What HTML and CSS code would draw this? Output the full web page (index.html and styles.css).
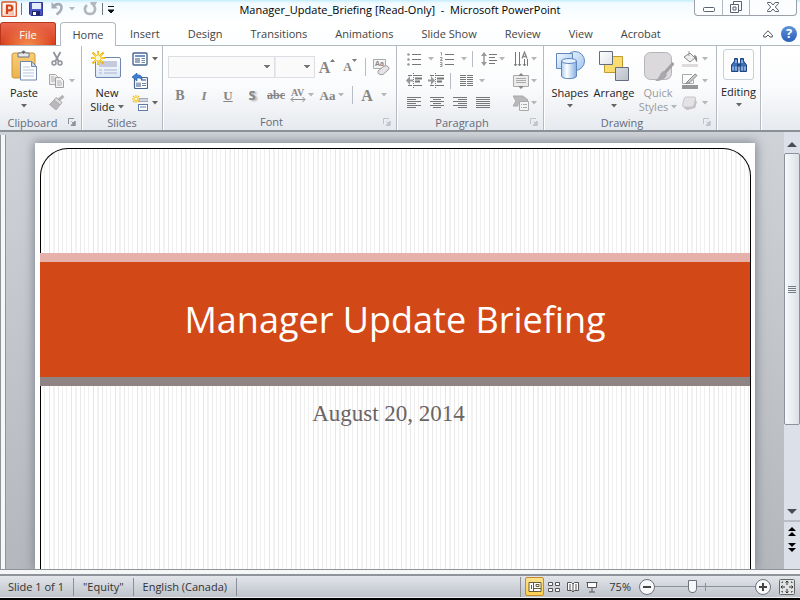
FILE: index.html
```html
<!DOCTYPE html>
<html lang="en">
<head>
<meta charset="utf-8">
<title>Manager_Update_Briefing [Read-Only] - Microsoft PowerPoint</title>
<link rel="stylesheet" href="styles.css">
</head>
<body>
<svg class="defs" aria-hidden="true">
  <defs>
    <linearGradient id="blue" x1="0" y1="0" x2="1" y2="1"><stop offset="0" stop-color="#f4f9ff"/><stop offset="1" stop-color="#9fc4ee"/></linearGradient>
    <linearGradient id="cyl" x1="0" y1="0" x2="1" y2="0"><stop offset="0" stop-color="#a5c9f1"/><stop offset=".35" stop-color="#fff"/><stop offset="1" stop-color="#83afe3"/></linearGradient>
    <linearGradient id="silver" x1="0" y1="0" x2="1" y2="1"><stop offset="0" stop-color="#fff"/><stop offset="1" stop-color="#b9bfc9"/></linearGradient>
    <linearGradient id="gold" x1="0" y1="0" x2="0" y2="1"><stop offset="0" stop-color="#f8ce78"/><stop offset="1" stop-color="#eeb24b"/></linearGradient>
    <linearGradient id="panel" x1="0" y1="0" x2="0" y2="1"><stop offset="0" stop-color="#fff"/><stop offset="1" stop-color="#dbe6f5"/></linearGradient>
    <linearGradient id="office" x1="0" y1="0" x2="1" y2="1"><stop offset="0" stop-color="#fff"/><stop offset="1" stop-color="#f3b79f"/></linearGradient>
    <symbol id="down" viewBox="0 0 6 4"><path d="M0 0h6L3 3.500z" fill="currentColor"/></symbol>
    <symbol id="launch" viewBox="0 0 8 8"><path d="M.5 6V.5H6M3.500 3.500L6 6M7 3v4.500H3z" fill="none" stroke="currentColor"/><path d="M7.500 3v5H3z" fill="currentColor"/></symbol>
    <symbol id="burst" viewBox="0 0 14 14"><path d="M7 0v14M0 7h14M1.500 1.500l11 11M12.500 1.500l-11 11" stroke="#efb310" stroke-width="2"/><path d="M7 1v12M1 7h12M3 3l8 8M11 3l-8 8" stroke="#ffe65c"/><circle cx="7" cy="7" r="2.500" fill="#fffbd0"/></symbol>
  </defs>
</svg>
<div class="app">
  <header class="titlebar">
    <div class="quick">
      <svg class="i16" viewBox="0 0 16 16"><rect x=".8" y="1" width="14.500" height="14.500" rx="1" fill="#fff8f4" stroke="#e0532a" stroke-width="1.400"/><path d="M3 3h10v11H3z" fill="url(#office)"/><path d="M6 13V4.500h2.800a2.400 2.400 0 0 1 0 4.800H6" fill="none" stroke="#d2421a" stroke-width="2.200"/></svg>
      <span class="bar"></span>
      <button class="save" aria-label="Save"><svg class="i16" viewBox="0 0 16 16"><path d="M1.500 1.500h13v13H3l-1.500-1.500z" fill="#4b55c4" stroke="#30389b"/><path d="M4 2h9v6H4z" fill="#e4ecfb"/><path d="M4 10h8v4.500H4z" fill="#1f2769"/><path d="M5 11h3v3H5z" fill="#fff"/></svg></button>
      <button class="undo muted" aria-label="Undo"><svg class="i16" viewBox="0 0 16 16"><path d="M2.500 1v6.500H9z" fill="#a7adb8"/><path d="M4 6.500C6 2.500 12.500 1.500 12.500 6.500c0 3-2 5-5 7" fill="none" stroke="#a7adb8" stroke-width="2.600"/></svg><svg class="arr"><use href="#down"/></svg></button>
      <button class="redo" aria-label="Redo"><svg class="i16" viewBox="0 0 16 16"><path d="M8.500 1H15l-1 2-2 3-3.500-3z" fill="#b3b6bc"/><path d="M5 4C1 7.500 3 13 8 13c5 0 6.500-5.500 3.500-9" fill="none" stroke="#b3b6bc" stroke-width="2.600"/></svg></button>
      <span class="bar"></span>
      <button class="custom" aria-label="Customize Quick Access Toolbar"><svg width="8" height="8" viewBox="0 0 8 8"><path d="M1 .5h6M1 4h6L4 7z" fill="#111" stroke="#111"/></svg></button>
    </div>
    <div class="doc">Manager_Update_Briefing [Read-Only]&nbsp; -&nbsp; Microsoft PowerPoint</div>
    <div class="window">
      <button aria-label="Minimize"><svg width="12" height="13" viewBox="0 0 12 13"><rect x=".5" y="6.500" width="11" height="4" rx="1" fill="#fff" stroke="#5b6270"/></svg></button>
      <button aria-label="Restore"><svg width="12" height="13" viewBox="0 0 12 13"><path d="M3.500 3V.5h8v9H9" fill="#fff" stroke="#5b6270"/><path d="M.5 3.500h8v8h-8zM3 6h3v3H3z" fill="#fff" stroke="#5b6270"/></svg></button>
      <button class="close" aria-label="Close"><svg width="12" height="13" viewBox="0 0 12 13"><path d="M.5 1.500h3.300L6 4l2.200-2.500h3.300v1L8.300 6l3.200 3.500v1H8.200L6 8l-2.200 2.500H.5v-1L3.700 6 .5 2.500z" fill="#fff" stroke="#5b6270"/></svg></button>
    </div>
  </header>

  <nav class="tabs">
    <button class="file">File</button>
    <button class="on">Home</button>
    <button>Insert</button><button>Design</button><button>Transitions</button><button>Animations</button><button>Slide Show</button><button>Review</button><button>View</button><button>Acrobat</button>
    <button class="min" aria-label="Minimize the Ribbon"><svg width="10" height="8" viewBox="0 0 10 8"><path d="M.7 5L5 .8 9.300 5v2H7L5 5 3 7H.7z" fill="#fff" stroke="#50555e"/></svg></button>
    <button class="help" aria-label="Help">?</button>
  </nav>

  <main class="ribbon">
    <section class="group clipboard">
      <div class="body">
        <button class="big"><svg class="pic" viewBox="0 0 32 32"><rect x="4" y="4" width="23" height="25" rx="2" fill="url(#gold)" stroke="#c9963e"/><path d="M10 8V4h3.500a2 2 0 0 1 4 0H21v4z" fill="#e6e9ee" stroke="#6d7581"/><circle cx="15.500" cy="3.500" r="1.200" fill="#555"/><path d="M12.500 12.500h11l5 5V31h-16z" fill="#fdfeff" stroke="#7289ab"/><path d="M23.500 12.500v5h5z" fill="#cbd9ec" stroke="#7289ab"/><path d="M15 18h7M15 21h11M15 24h11M15 27h11" stroke="#b5c5dc"/></svg><span>Paste</span><svg class="arr"><use href="#down"/></svg></button>
        <div class="small muted">
          <button aria-label="Cut"><svg class="i16" viewBox="0 0 16 16"><path d="M4.500 1l5 9M11.500 1l-5 9" stroke="#8f949c" stroke-width="1.800"/><circle cx="5" cy="12" r="2" fill="#eee" stroke="#8f949c" stroke-width="1.500"/><circle cx="11" cy="12" r="2" fill="#eee" stroke="#8f949c" stroke-width="1.500"/></svg></button>
          <button aria-label="Copy"><svg class="i16" viewBox="0 0 16 16"><path d="M.5 1.500h6l2 2v8h-8z" fill="#eee" stroke="#a9a9ab"/><path d="M6.500 4.500h5l3 3v7h-8z" fill="#f2f2f2" stroke="#a0a0a3"/><path d="M2 4h3M2 6h4M2 8h4M8 8h4M8 10h5M8 12h5" stroke="#b0b0b3"/></svg><svg class="arr"><use href="#down"/></svg></button>
          <button aria-label="Format Painter"><svg class="i16" viewBox="0 0 16 16"><path d="M14.500 1l-5 4" stroke="#b4b2b5" stroke-width="3"/><path d="M7 2.500l6 5-2 2.500-6-5z" fill="#dddcde" stroke="#a5a3a6"/><path d="M5 5l6 5-4 5L.5 9.500z" fill="#bab8bb" stroke="#b0aeb1"/></svg></button>
        </div>
      </div>
      <footer><h2>Clipboard</h2><button class="launch" aria-label="Clipboard options"><svg><use href="#launch"/></svg></button></footer>
    </section>

    <section class="group slides">
      <div class="body">
        <button class="big"><svg class="pic" viewBox="0 0 32 32"><rect x="4.500" y="8.500" width="25" height="20" rx="1.500" fill="url(#panel)" stroke="#6e88ae"/><path d="M8 12h18v6H8z" fill="#c5cbdc"/><path d="M8 21h3M13 21h13M8 24h3M13 24h13" stroke="#a7b5cf"/><use href="#burst" x="0" y="2" width="14" height="14"/></svg><span>New</span><span>Slide <svg class="arr"><use href="#down"/></svg></span></button>
        <div class="small">
          <button aria-label="Layout"><svg class="i16" viewBox="0 0 16 16"><rect x="1" y="2" width="14" height="12" rx="1" fill="#fff" stroke="#49648e" stroke-width="1.400"/><path d="M3 4h10v2H3z" fill="#6f93c9"/><path d="M3 7h5v5H3z" fill="#9aa9c0"/><path d="M9.500 7.500H13M9.500 9.500H13M9.500 11.500H13" stroke="#7187a9"/></svg><svg class="arr"><use href="#down"/></svg></button>
          <button aria-label="Reset"><svg class="i16" viewBox="0 0 16 16"><rect x="2.500" y="4.500" width="13" height="11" rx="1" fill="#fff" stroke="#49648e" stroke-width="1.200"/><path d="M9 6h5v2H9z" fill="#86a6d5"/><path d="M4 9.500h5v4.500H4z" fill="#9aa9c0"/><path d="M10 10.500h4M10 12.500h4" stroke="#7187a9"/><path d="M0 4l5-4v2c4-.5 5.500 1.500 5 5C8.500 5 7 5 5 5v3z" fill="#3f7fd0" stroke="#2459a0" stroke-width=".6"/></svg></button>
          <button aria-label="Section"><svg class="i16" viewBox="0 0 16 16"><path d="M7 3.500h9v3H7z" fill="#d2d6df" stroke="#a2a9b7"/><rect x="6.500" y="9.500" width="9" height="6" fill="#fff" stroke="#5f7ba6"/><path d="M8 11h6v2H8z" fill="#b1bfd7"/><use href="#burst" x="0" y="0" width="8" height="8"/></svg><svg class="arr"><use href="#down"/></svg></button>
        </div>
      </div>
      <footer><h2>Slides</h2></footer>
    </section>

    <section class="group font">
      <div class="body rows">
        <div class="line">
          <select class="face" aria-label="Font"><option></option></select><select class="size" aria-label="Font Size"><option></option></select>
          <button class="grow serif" aria-label="Increase Font Size">A<svg width="5" height="16" viewBox="0 0 5 16"><path d="M0 3l2.500-3L5 3z" fill="#777"/></svg></button>
          <button class="shrink serif" aria-label="Decrease Font Size">A<svg width="5" height="16" viewBox="0 0 5 16"><path d="M0 0l2.500 3L5 0z" fill="#777"/></svg></button>
          <span class="bar"></span>
          <button class="clear" aria-label="Clear Formatting"><svg width="18" height="18" viewBox="0 0 18 18"><path d="M1.500 1.500h12v9h-12z" fill="#f4f4f4" stroke="#aaa"/><text x="3" y="8" class="tiny">Aa</text><path d="M6 13l6-5q3-1 4.500 1t-.5 3l-5 4.500q-2.500.5-4-.5T6 13z" fill="#e6e3e6" stroke="#9c999c"/></svg></button>
        </div>
        <div class="line format">
          <button class="ch serif bold">B</button><button class="ch serif italic">I</button><button class="ch serif under">U</button><button class="ch shade">S</button><button class="ch serif strike">abc</button>
          <button class="av serif" aria-label="Character Spacing"><svg width="16" height="16" viewBox="0 0 16 16"><text x="1" y="9" class="avt">AV</text><path d="M1 12.500h14M3.500 10L1 12.500 3.500 15M12.500 10l2.500 2.500-2.500 2.500" fill="none" stroke="#909090"/></svg><svg class="arr"><use href="#down"/></svg></button>
          <button class="case serif">Aa<svg class="arr"><use href="#down"/></svg></button>
          <span class="bar"></span>
          <button class="color serif">A<svg class="arr"><use href="#down"/></svg></button>
        </div>
      </div>
      <footer><h2>Font</h2><button class="launch off" aria-label="Font options"><svg><use href="#launch"/></svg></button></footer>
    </section>

    <section class="group paragraph">
      <div class="body split muted">
        <div class="lines">
          <div class="row">
            <button class="wide" aria-label="Bullets"><svg class="i16" viewBox="0 0 16 16"><path d="M6 3.500h9M6 8.500h9M6 13.500h9" stroke="#777"/><circle cx="2.500" cy="3.500" r="1.300" fill="#999"/><circle cx="2.500" cy="8.500" r="1.300" fill="#999"/><circle cx="2.500" cy="13.500" r="1.300" fill="#999"/></svg><svg class="arr"><use href="#down"/></svg></button>
            <button class="wide" aria-label="Numbering"><svg class="i16" viewBox="0 0 16 16"><path d="M6 3.500h9M6 8.500h9M6 13.500h9" stroke="#777"/><path d="M1.500 1.500h1v3M1 6.500h2v1.500l-2 1.500h2.500M1 11.500h2v4H1M1 13.500h2" fill="none" stroke="#999"/></svg><svg class="arr"><use href="#down"/></svg></button>
            <span class="bar"></span>
            <button aria-label="Line Spacing"><svg class="i16" viewBox="0 0 16 16"><path d="M3 2v12" stroke="#999" stroke-width="1.500"/><path d="M0 5l3-4 3 4zM0 11l3 4 3-4z" fill="#999"/><path d="M8 3.500h8M8 6.500h6M8 9.500h8M8 12.500h6" stroke="#777"/></svg><svg class="arr"><use href="#down"/></svg></button>
          </div>
          <div class="row">
            <button aria-label="Decrease List Level"><svg class="i16" viewBox="0 0 16 16"><path d="M2 2.500h4M8 2.500h8M2 12.500h4M8 12.500h8" stroke="#777"/><path d="M9 5.500h7M9 8.500h5" stroke="#777" stroke-width="2"/><path d="M7.500 0v16" stroke="#777" stroke-dasharray="1 1"/><path d="M7 8.500H4V12L0 7.500 4 3v3.500h3z" fill="#999"/></svg></button>
            <button class="inc" aria-label="Increase List Level"><svg class="i16" viewBox="0 0 16 16"><path d="M2 2.500h4M8 2.500h8M2 12.500h4M8 12.500h8" stroke="#777"/><path d="M9 5.500h7M9 8.500h5" stroke="#777" stroke-width="2"/><path d="M7.500 0v16" stroke="#777" stroke-dasharray="1 1"/><path d="M0 6.500h3V3l4 4.500L3 12V8.500H0z" fill="#999"/></svg></button>
            <span class="bar"></span>
            <button class="cols" aria-label="Columns"><svg class="i16" viewBox="0 0 16 16"><path d="M1 2.500h6M1 4.500h6M1 6.500h6M1 8.500h6M1 10.500h6M1 12.500h6M8 2.500h6M8 4.500h6M8 6.500h6M8 8.500h6M8 10.500h6M8 12.500h6" stroke="#777"/></svg><svg class="arr"><use href="#down"/></svg></button>
          </div>
          <div class="row aligns">
            <button aria-label="Align Left"><svg class="i16" viewBox="0 0 16 16"><path d="M1 2.500h14M1 4.500h9M1 6.500h14M1 8.500h9M1 10.500h14M1 12.500h9" stroke="#777"/></svg></button>
            <button aria-label="Center"><svg class="i16" viewBox="0 0 16 16"><path d="M1 2.500h14M4 4.500h8M1 6.500h14M4 8.500h8M1 10.500h14M4 12.500h8" stroke="#777"/></svg></button>
            <button aria-label="Align Right"><svg class="i16" viewBox="0 0 16 16"><path d="M1 2.500h14M6 4.500h9M1 6.500h14M6 8.500h9M1 10.500h14M6 12.500h9" stroke="#777"/></svg></button>
            <button aria-label="Justify"><svg class="i16" viewBox="0 0 16 16"><path d="M1 2.500h14M1 4.500h14M1 6.500h14M1 8.500h14M1 10.500h14M1 12.500h14" stroke="#777"/></svg></button>
          </div>
        </div>
        <div class="small">
          <button aria-label="Text Direction"><svg class="i16" viewBox="0 0 16 16"><path d="M2.500 1v14M6.500 1v14M11.500 8v7M14.500 8v7" stroke="#777"/><path d="M9 7.500L11.500 1 14 7.500M10 5.500h3" fill="none" stroke="#888" stroke-width="1.300"/><path d="M1 13l1.500 2L4 13M5 13l1.500 2L8 13M10 13l1.500 2 1.500-2" fill="none" stroke="#888"/></svg><svg class="arr"><use href="#down"/></svg></button>
          <button aria-label="Align Text"><svg class="i16" viewBox="0 0 16 16"><path d="M.5 2.500h15v11H.5z" fill="#ececed" stroke="#aaa"/><path d="M3 5.500h10M3 7.500h10M3 9.500h10" stroke="#aaa"/><path d="M5 3l3-3 3 3zM5 13l3 3 3-3z" fill="#888"/></svg><svg class="arr"><use href="#down"/></svg></button>
          <button aria-label="Convert to SmartArt"><svg class="i16" viewBox="0 0 16 16"><path d="M0 1h10l5 4-3 3H5v3H0l3-5z" fill="#b9b9bb" stroke="#aaa"/><path d="M6.500 6.500h9v9h-9z" fill="#f4f4f4" stroke="#aaa"/><path d="M8 9.500h1M10 9.500h4M8 12.500h1M10 12.500h4" stroke="#aaa"/></svg><svg class="arr"><use href="#down"/></svg></button>
        </div>
      </div>
      <footer><h2>Paragraph</h2><button class="launch off" aria-label="Paragraph options"><svg><use href="#launch"/></svg></button></footer>
    </section>

    <section class="group drawing">
      <div class="body">
        <button class="big"><svg class="pic" viewBox="0 0 32 32"><circle cx="21" cy="12" r="9.500" fill="url(#blue)" stroke="#5e87bd"/><path d="M2.500 4.500h16v15h-16z" fill="url(#blue)" stroke="#5e87bd"/><path d="M7.500 12v15c0 3.500 15 3.500 15 0V12z" fill="url(#cyl)" stroke="#5e87bd"/><ellipse cx="15" cy="12" rx="7.500" ry="2.500" fill="#e5f1ff" stroke="#5e87bd"/></svg><span>Shapes</span><svg class="arr"><use href="#down"/></svg></button>
        <button class="big"><svg class="pic" viewBox="0 0 32 32"><path d="M6.500 7.500h18v16h-18z" fill="#fbdc70" stroke="#c09a32"/><path d="M1.500 2.500h13v13h-13zM17.500 18.500h13v13h-13z" fill="url(#silver)" stroke="#626d80"/></svg><span>Arrange</span><svg class="arr"><use href="#down"/></svg></button>
        <button class="big off"><svg class="pic" viewBox="0 0 32 32"><rect x="2.500" y="3.500" width="27" height="27" rx="6" fill="#dcd9dd" stroke="#b6b3b8"/><path d="M31.500 14l-9 10" stroke="#a3a1a5" stroke-width="3"/><path d="M21 22l4 3.500c-2 5-6 6.500-12 6.500 4-2 4-7 8-10z" fill="#aaa8ac"/></svg><span>Quick</span><span>Styles <svg class="arr"><use href="#down"/></svg></span></button>
        <div class="small muted">
          <button aria-label="Shape Fill"><svg class="i16" viewBox="0 0 16 16"><path d="M2 6l6-4 5 5-5 4z" fill="#eee" stroke="#888"/><path d="M7 0v5" stroke="#999"/><path d="M12 4q4 0 3 7-2-1-3-7z" fill="#888"/><path d="M0 13h16v3H0z" fill="#dedade"/></svg><svg class="arr"><use href="#down"/></svg></button>
          <button aria-label="Shape Outline"><svg class="i16" viewBox="0 0 16 16"><path d="M10 1.500H.5v9h11V7" fill="none" stroke="#aaa"/><path d="M5 9l8-8 2 1.500-7 7-4 1z" fill="#ccc" stroke="#888"/><path d="M0 12h16v4H0z" fill="#969696"/></svg><svg class="arr"><use href="#down"/></svg></button>
          <button aria-label="Shape Effects"><svg class="i16" viewBox="0 0 16 16"><path d="M5 5l8-1 2 3-2 6-8 2-3-2z" fill="#c2c0c3"/><path d="M4 2h8q2 0 1.500 2l-1.500 6q-.5 2-2.500 2H3Q0 12 .5 10L2 4q.5-2 2-2z" fill="#e4e2e5" stroke="#c8c6c9"/></svg><svg class="arr"><use href="#down"/></svg></button>
        </div>
      </div>
      <footer><h2>Drawing</h2><button class="launch off" aria-label="Drawing options"><svg><use href="#launch"/></svg></button></footer>
    </section>

    <section class="group editing">
      <button class="big"><span class="frame"><svg class="i16" viewBox="0 0 16 16"><path d="M3.500 1.500h3V5l.5 2v7.500H.5V8l3-4zM9.500 1.500h3V4l3 4v6.500H9V7l.5-2z" fill="#3b6fb5" stroke="#1e4682"/><path d="M6 6.500h4v3H6z" fill="#1e4682"/><path d="M2 9.500v4M5 9.500v4M11 9.500v4M14 9.500v4M5 3v3M11 3v3" stroke="#d4e6fb"/></svg></span><span>Editing</span><svg class="arr"><use href="#down"/></svg></button>
    </section>
  </main>

  <div class="workspace">
    <div class="splitter"></div>
    <div class="stage">
      <article class="slide">
        <div class="sheet">
          <h1>Manager Update Briefing</h1>
          <p>August 20, 2014</p>
        </div>
      </article>
    </div>
    <div class="scroll">
      <button aria-label="Scroll up"><svg width="10" height="5" viewBox="0 0 10 5"><path d="M0 5l5-5 5 5z" fill="#484d55"/></svg></button>
      <div class="track"><div class="thumb"><i></i><i></i><i></i><i></i></div></div>
      <button aria-label="Scroll down"><svg width="10" height="5" viewBox="0 0 10 5"><path d="M0 0l5 5 5-5z" fill="#484d55"/></svg></button>
      <div class="jump">
        <button aria-label="Previous Slide"><svg width="8" height="9" viewBox="0 0 8 9"><path d="M0 4l4-4 4 4zM0 9l4-4 4 4z"/></svg></button>
        <button aria-label="Next Slide"><svg width="8" height="9" viewBox="0 0 8 9"><path d="M0 0l4 4 4-4zM0 5l4 4 4-4z"/></svg></button>
      </div>
    </div>
  </div>

  <footer class="status">
    <span class="cell">Slide 1 of 1</span><span class="cell">"Equity"</span><span class="cell">English (Canada)</span>
    <div class="views">
      <button class="sel" aria-label="Normal"><svg width="14" height="12" viewBox="0 0 14 12"><path d="M1 1.500h12v9H1z" fill="#fff" stroke="#665b37"/><path d="M5.500 1v10M5.500 7.500H13M8 3.500h3v2H8zM3.500 4v4" fill="none" stroke="#665b37"/></svg></button>
      <button aria-label="Slide Sorter"><svg width="12" height="12" viewBox="0 0 12 12"><path d="M.5 1.500h4v3h-4zM7.500 1.500h4v3h-4zM.5 7.500h4v3h-4zM7.500 7.500h4v3h-4z" fill="#fff" stroke="#555"/></svg></button>
      <button aria-label="Reading View"><svg width="12" height="12" viewBox="0 0 12 12"><path d="M.5 1.500h4L6 3l1.500-1.500h4v8h-4L6 11 4.500 9.500h-4zM6 3v8M2 4h2M2 6h2M2 8h2M8 4h2M8 6h2M8 8h2" fill="#fff" stroke="#555"/></svg></button>
      <button aria-label="Slide Show"><svg width="12" height="12" viewBox="0 0 12 12"><path d="M.5 1.500h11M1.500 2v4.500h9V2M6 7v4M3 11h6" fill="#fff" stroke="#555"/></svg></button>
    </div>
    <label class="pct" for="zoom">75%</label>
    <div class="zoom">
      <button class="round" aria-label="Zoom out"><svg width="10" height="10" viewBox="0 0 10 10"><path d="M1 5h8" stroke="#444" stroke-width="2"/></svg></button>
      <input id="zoom" type="range" min="0" max="100" value="36">
      <button class="round" aria-label="Zoom in"><svg width="10" height="10" viewBox="0 0 10 10"><path d="M1 5h8M5 1v8" stroke="#444" stroke-width="2"/></svg></button>
    </div>
    <button class="fit" aria-label="Fit to window"><svg width="16" height="16" viewBox="0 0 16 16"><rect x=".5" y=".5" width="15" height="15" rx="1" fill="#e2e3e5" stroke="#666"/><path d="M8 2v4M6.500 3.500L8 2l1.500 1.500M8 14v-4M6.500 12.500L8 14l1.500-1.500M2 8h4M3.500 6.500L2 8l1.500 1.500M14 8h-4M12.500 6.500L14 8l-1.500 1.500" fill="none" stroke="#333"/><path d="M3 4V3h1M12 3h1v1M3 12v1h1M13 12v1h-1" fill="none" stroke="#333"/></svg></button>
  </footer>
</div>
</body>
</html>
```
FILE: styles.css
```css
* { box-sizing: border-box; }
body {
  margin: 0;
  font: 11px/13px "Open Sans", "Noto Sans", sans-serif;
  color: #333;
}
button {
  display: flex;
  align-items: center;
  justify-content: center;
  padding: 0;
  border: 0;
  background: none;
  font: inherit;
  color: inherit;
}
svg { display: block; flex: none; }
h1, h2, p { margin: 0; font-weight: 400; }
.defs { position: absolute; width: 0; height: 0; }
.i16 { width: 16px; height: 16px; }
.arr { width: 6px; height: 4px; color: #666; }
.muted .arr { color: #b4b6ba; }
.bar { flex: none; width: 1px; height: 16px; background: #b8bcc4; }

.app {
  display: flex;
  flex-direction: column;
  height: 100vh;
  background: #000;
  overflow: hidden;
}

/* Title bar */
.titlebar {
  display: grid;
  grid-template-columns: 1fr auto 1fr;
  height: 22px;
  background: linear-gradient(#c4ecfb, #f1fbff 3px, #fff);
}
.quick { display: flex; align-items: center; height: 18px; padding-left: 1px; }
.quick .bar { height: 12px; background: #777; margin: 0 4px; }
.save { margin-left: 2px; }
.undo { gap: 4px; margin: 0 7px 0 5px; }
.quick .custom { padding-top: 2px; }
.doc { padding-top: 3px; color: #000; white-space: nowrap; }
.window {
  justify-self: end;
  display: flex;
  height: 16px;
  margin-right: 3px;
  border: 1px solid #9ba0a8;
  border-top: 0;
  border-radius: 0 0 4px 4px;
  background: #fbfdfe;
}
.window button { width: 27px; }
.window button + button { border-left: 1px solid #b4b8be; }
.window .close { width: 47px; }

/* Tabs */
.tabs {
  display: flex;
  align-items: stretch;
  height: 24px;
  background: linear-gradient(#fff, #fbfeff);
  border-bottom: 1px solid #b3b8c0;
}
.tabs button { padding: 0 14px; color: #444; white-space: nowrap; }
.tabs .file {
  width: 56px;
  margin-right: 4px;
  border: 1px solid #b8361b;
  border-bottom: 0;
  border-radius: 3px 3px 0 0;
  background: radial-gradient(ellipse at 50% 110%, #f5914f, transparent 70%), linear-gradient(#e9694f, #d93d1c);
  color: #fff;
}
.tabs .on {
  width: 56px;
  margin-bottom: -1px;
  padding: 0;
  border: 1px solid #b3b8c0;
  border-bottom: 0;
  border-radius: 4px 4px 0 0;
  background: #fff;
}
.tabs .min { margin-left: auto; padding: 0 8px; }
.tabs .help {
  align-self: center;
  width: 16px;
  height: 16px;
  margin-right: 3px;
  padding: 0;
  border-radius: 50%;
  background: linear-gradient(#5f93dc, #2c5fb8);
  color: #fff;
  font-size: 13px;
  font-weight: 700;
}

/* Ribbon */
.ribbon {
  display: flex;
  height: 86px;
  flex: none;
  background: linear-gradient(#fff, #fafbfc 50%, #e6e9ee);
  border-bottom: 2px solid #8b8f96;
}
.group {
  display: flex;
  flex-direction: column;
  border-right: 1px solid #b5b9c1;
  box-shadow: 1px 0 #fff;
}
.clipboard { width: 82px; }
.slides { width: 81px; }
.font { width: 234px; }
.paragraph { width: 147px; }
.drawing { width: 173px; }
.editing { width: 44px; }
.body { display: flex; height: 68px; padding-top: 2px; }
.group footer { display: flex; align-items: center; height: 17px; padding: 0 5px; }
h2 { flex: 1; font-size: 11px; text-align: center; color: #636b7a; }
.group footer:has(.launch) h2 { padding-right: 8px; }
.clipboard h2 { white-space: nowrap; }
.launch svg { width: 8px; height: 8px; color: #8c9097; }
.launch.off svg { color: #c0c3c8; }
.big {
  flex-direction: column;
  justify-content: flex-start;
  width: 44px;
  color: #222;
  line-height: 13px;
}
.big .pic { width: 32px; height: 32px; margin-bottom: 5px; }
.big span { display: flex; align-items: center; gap: 3px; white-space: nowrap; }
.big span + span { padding-top: 1px; }
.big > .arr { margin-top: 5px; }
.big.off { color: #999ba0; }
.big.off .arr { color: #b4b6ba; }
.body .big { padding-top: 1px; }
.clipboard .big, .slides .big { width: 48px; }
.small { display: flex; flex-direction: column; }
.small button { width: 28px; height: 22px; gap: 4px; justify-content: flex-start; }
.slides .body { padding-left: 1px; }
.clipboard .small, .slides .small { margin-left: 1px; }
.drawing .body { padding-left: 4px; }
.drawing .small { margin-left: 2px; }

/* Font group */
.rows { flex-direction: column; gap: 6px; padding: 10px 0 0 5px; }
.line { display: flex; align-items: center; height: 22px; color: #858585; }
select {
  appearance: none;
  height: 22px;
  border: 1px solid #dcdee3;
  border-radius: 0;
  background:
    linear-gradient(#777, #777) right 4px top 8px / 6px 1px no-repeat,
    linear-gradient(#777, #777) right 5px top 9px / 4px 1px no-repeat,
    linear-gradient(#777, #777) right 6px top 10px / 2px 1px no-repeat,
    #fafafb;
}
.face { width: 107px; }
.size { width: 40px; border-left-color: #e9ebee; }
.serif { font-family: "Liberation Serif", serif; font-weight: 700; }
.grow { width: 24px; font-size: 16px; }
.shrink { width: 22px; font-size: 12px; }
.line > .bar { height: 18px; margin: 0 4px; }
.clear { width: 22px; }
.tiny { font: 700 7px "Open Sans", sans-serif; fill: #888; }
.format .ch { width: 24px; font-size: 13px; }
.format .bold { font-size: 14px; }
.format .italic { font-style: italic; }
.under { text-decoration: underline; }
.shade { font-weight: 700; text-shadow: 2px 1px 2px #aaa; }
.format .strike { font-size: 12px; text-decoration: line-through; }
.av { width: 28px; gap: 2px; }
.avt { font: 700 10px "Liberation Serif", serif; fill: #888; }
.case { width: 32px; gap: 3px; font-size: 13px; }
.color { width: 34px; gap: 8px; font-size: 16px; }
.format .arr { color: #b4b6ba; }

/* Paragraph group */
.split { padding-left: 9px; }
.lines { width: 107px; }
.row { display: flex; align-items: center; height: 22px; }
.row button { gap: 2px; }
.row .wide { gap: 6px; margin-right: 5px; }
.row .bar { margin: 0 8px 0 0; }
.row .inc { margin: 0 6px; }
.row .cols { gap: 4px; }
.aligns { gap: 7px; }
.split .small button { gap: 2px; }

/* Editing group */
.editing .big { width: auto; padding-top: 3px; }
.editing .frame {
  justify-content: center;
  width: 31px;
  height: 31px;
  margin-bottom: 4px;
  border: 1px solid #c9cfd8;
  border-radius: 3px;
  background: #fdfdfe;
}

/* Slide workspace */
.workspace {
  flex: 1;
  display: flex;
  min-height: 0;
  background: linear-gradient(#cfd2d7, #b4b7bc);
  border-bottom: 1px solid #8f939a;
}
.splitter { width: 6px; margin-top: 3px; border: solid #8f939a; border-width: 0 1px; background: #f7f7f8; }
.stage { flex: 1; display: flex; padding: 11px 29px 0; overflow: hidden; }
.slide {
  flex: 1;
  padding: 5px 4px 0 5px;
  background: #fff;
  box-shadow: 0 0 10px 1px #7d838c;
}
.sheet {
  height: 100%;
  padding-top: 104px;
  border: solid #000;
  border-width: 1px 1px 0;
  border-radius: 28px 28px 0 0;
  background: repeating-linear-gradient(90deg,
    transparent 0 3px, #f0f0f0 3px 4px, transparent 4px 8px, #e6e6e6 8px 9px,
    transparent 9px 12px, #f2f2f2 12px 14px, transparent 14px 17px, #e9e9e9 17px 18px,
    transparent 18px 21px, #efefef 21px 22px);
}
h1 {
  display: flex;
  align-items: center;
  justify-content: center;
  height: 133px;
  margin-left: -1px;
  border: solid #e6b0ab;
  border-width: 9px 0;
  border-bottom-color: #8f8383;
  background: #d24817;
  color: #fff;
  font-size: 36px;
  line-height: 48px;
}
.sheet p {
  padding: 14px 14px 0 0;
  font: 23px/28px "Liberation Serif", serif;
  text-align: center;
  color: #696464;
}

/* Scroll bar */
.scroll {
  display: flex;
  flex-direction: column;
  width: 16px;
  padding-top: 3px;
  background: #dce0e8;
}
.scroll button { height: 18px; width: 100%; }
.track { flex: 1; }
.thumb {
  display: flex;
  flex-direction: column;
  align-items: center;
  justify-content: center;
  gap: 1px;
  height: 78%;
  border: 1px solid #8c929c;
  border-radius: 2px;
  background: linear-gradient(90deg, #f8fafc, #dce0e6);
}
.thumb i { width: 8px; height: 1px; background: #767c86; }
.jump { height: 49px; padding-top: 1px; border-top: 2px solid #b9bec7; }
.jump button { height: 16px; }

/* Status bar */
.status {
  display: flex;
  align-items: center;
  height: 28px;
  flex: none;
  margin-bottom: 2px;
  padding-top: 6px;
  border-bottom: 1px solid #eee;
  background: linear-gradient(#f5f6f7 4px, #8f939a 4px 6px, #e2e5ea 6px, #bfc4cb);
  white-space: nowrap;
}
.cell { height: 18px; padding: 2px 9px 0; border-right: 1px solid #8b9098; }
.cell:first-child { padding-left: 8px; }
.views {
  display: flex;
  align-items: center;
  height: 20px;
  margin-left: auto;
  padding-left: 4px;
  border-left: 1px solid #8b9098;
}
.views button { width: 19px; height: 19px; }
.views .sel { border: 1px solid #c48b2c; border-radius: 2px; background: linear-gradient(#fde28c, #fbd04f); }
.pct { margin: 0 8px; }
.zoom { display: flex; align-items: center; }
.round {
  width: 16px;
  height: 16px;
  border: 1px solid #6e737b;
  border-radius: 50%;
  background: #f7f8f9;
}
#zoom {
  appearance: none;
  width: 100px;
  height: 16px;
  margin: 0;
  background: linear-gradient(#8b9098, #8b9098) center / 100% 1px no-repeat, linear-gradient(#8b9098, #8b9098) center / 1px 8px no-repeat;
}
#zoom::-webkit-slider-thumb {
  appearance: none;
  width: 9px;
  height: 13px;
  border: 1px solid #6e737b;
  border-radius: 1px 1px 5px 5px;
  background: #f7f8f9;
}
.fit { margin: 0 5px 0 8px; }
```
